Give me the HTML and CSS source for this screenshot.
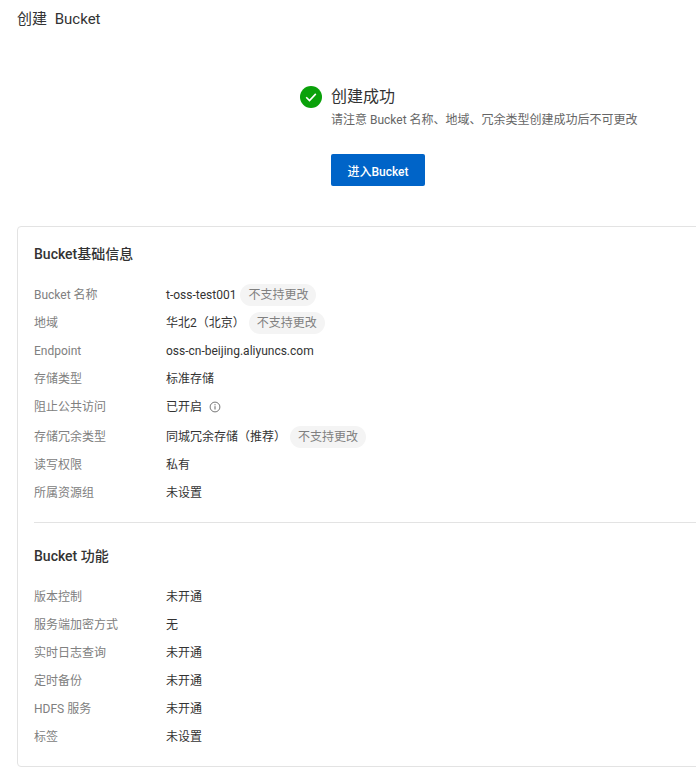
FILE: index.html
```html
<!DOCTYPE html>
<html lang="zh-CN">
<head>
<meta charset="utf-8">
<title>创建 Bucket</title>
<link rel="stylesheet" href="styles.css">
</head>
<body>
<h1 class="page-title">创建 Bucket</h1>
<section class="result">
  <div class="result-inner">
    <svg class="ok-icon" viewBox="0 0 22 22" width="22" height="22"><circle cx="11" cy="11" r="11" fill="#0aa10a"/><path d="M6.2 11.3l3.3 3.2 6.3-6.6" fill="none" stroke="#fff" stroke-width="1.6"/></svg>
    <div class="result-body">
      <div class="result-title">创建成功</div>
      <div class="result-note">请注意 Bucket 名称、地域、冗余类型创建成功后不可更改</div>
      <button class="primary">进入Bucket</button>
    </div>
  </div>
</section>
<section class="card">
  <h2 class="section-title">Bucket基础信息</h2>
  <dl class="rows">
    <div class="row"><dt>Bucket 名称</dt><dd>t-oss-test001<span class="tag">不支持更改</span></dd></div>
    <div class="row"><dt>地域</dt><dd>华北2（北京）<span class="tag">不支持更改</span></dd></div>
    <div class="row"><dt>Endpoint</dt><dd>oss-cn-beijing.aliyuncs.com</dd></div>
    <div class="row"><dt>存储类型</dt><dd>标准存储</dd></div>
    <div class="row"><dt>阻止公共访问</dt><dd>已开启<svg class="info" viewBox="0 0 12 12" width="12" height="12"><circle cx="6" cy="6" r="4.9" fill="none" stroke="#666" stroke-width="0.9"/><path d="M6 5.2v3.3M6 3.2v1.1" stroke="#666" stroke-width="1" fill="none"/></svg></dd></div>
    <div class="row row-gap"><dt>存储冗余类型</dt><dd>同城冗余存储（推荐）<span class="tag">不支持更改</span></dd></div>
    <div class="row"><dt>读写权限</dt><dd>私有</dd></div>
    <div class="row"><dt>所属资源组</dt><dd>未设置</dd></div>
  </dl>
  <hr class="divider">
  <h2 class="section-title">Bucket 功能</h2>
  <dl class="rows">
    <div class="row"><dt>版本控制</dt><dd>未开通</dd></div>
    <div class="row"><dt>服务端加密方式</dt><dd>无</dd></div>
    <div class="row"><dt>实时日志查询</dt><dd>未开通</dd></div>
    <div class="row"><dt>定时备份</dt><dd>未开通</dd></div>
    <div class="row"><dt>HDFS 服务</dt><dd>未开通</dd></div>
    <div class="row"><dt>标签</dt><dd>未设置</dd></div>
  </dl>
</section>
</body>
</html>
```
FILE: styles.css
```css
* { box-sizing: border-box; }
html, body { overflow: hidden; }
body {
  margin: 0;
  width: 696px;
  height: 782px;
  background: #fff;
  color: #333;
  font-family: Roboto, "Noto Sans CJK SC", sans-serif;
  font-size: 12px;
  padding-left: 17px;
}
.page-title {
  margin: 0;
  padding-top: 9px;
  height: 62px;
  font-size: 15px;
  line-height: 20px;
  font-weight: 400;
  word-spacing: 4px;
  color: #333;
}
.result { height: 164px; padding: 23px 0 0 283px; }
.result-inner { display: flex; gap: 9px; }
.ok-icon { flex: none; margin-top: 1px; }
.result-title { font-size: 16px; line-height: 22px; color: #333; margin-top: 1px; }
.result-note { font-size: 12px; line-height: 18px; color: #666; margin-top: 3px; white-space: nowrap; }
.primary {
  display: block;
  margin-top: 25px;
  width: 94px;
  height: 32px;
  border: 0;
  border-radius: 2px;
  background: #0064c8;
  color: #fff;
  font: 500 12px Roboto, "Noto Sans CJK SC", sans-serif;
  padding: 0;
}
.card {
  width: 700px;
  height: 541px;
  border: 1px solid #e3e3e3;
  border-radius: 4px;
  padding: 16px 16px 0;
}
.section-title {
  margin: 0;
  font-size: 14px;
  line-height: 22px;
  font-weight: 500;
  color: #333;
}
.rows { margin: 16px 0 0; }
.row { display: flex; height: 28px; align-items: center; line-height: 18px; }
.row-gap { margin-top: 2px; }
dt { width: 132px; flex: none; color: #808080; line-height: 18px; }
dd { margin: 0; display: flex; align-items: center; color: #333; white-space: nowrap; line-height: 18px; }
.tag {
  margin-left: 4px;
  height: 22px;
  padding: 0 8px;
  border-radius: 11px;
  background: #f4f4f4;
  color: #808080;
  line-height: 22px;
}
.info { margin-left: 7px; }
.divider { border: 0; border-top: 1px solid #e3e3e3; margin: 15px 0 22px; }
```
